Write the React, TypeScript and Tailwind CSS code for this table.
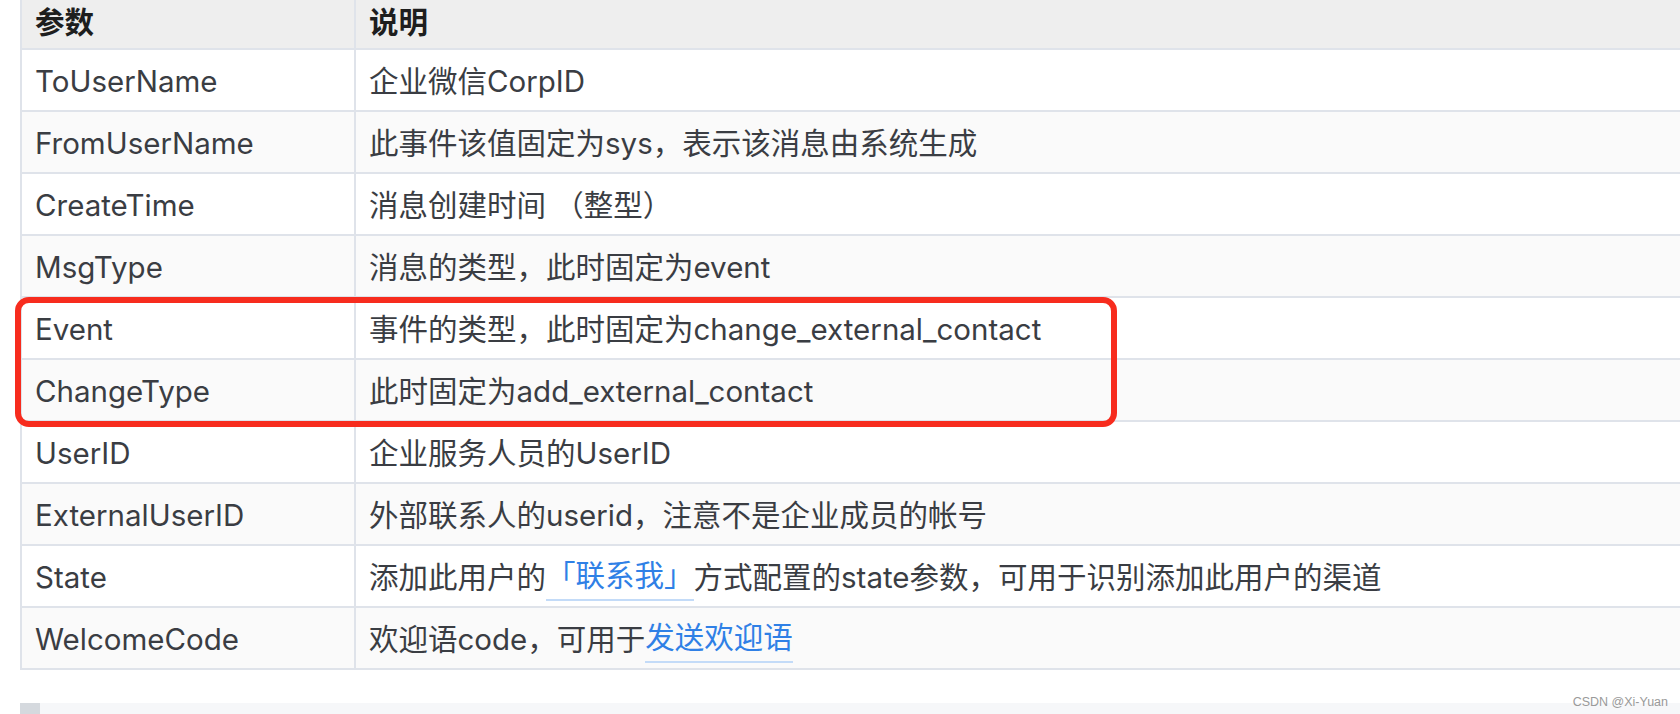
import React from "react";

type Row = { name: string; desc: React.ReactNode };

const Link = ({ children }: { children: React.ReactNode }) => (
  <span className="text-[#2f80e6] border-b-2 border-[#c3dbf8] pb-[1px]">{children}</span>
);

const rows: Row[] = [
  { name: "ToUserName", desc: "企业微信CorpID" },
  { name: "FromUserName", desc: "此事件该值固定为sys，表示该消息由系统生成" },
  { name: "CreateTime", desc: "消息创建时间 （整型）" },
  { name: "MsgType", desc: "消息的类型，此时固定为event" },
  { name: "Event", desc: "事件的类型，此时固定为change_external_contact" },
  { name: "ChangeType", desc: "此时固定为add_external_contact" },
  { name: "UserID", desc: "企业服务人员的UserID" },
  { name: "ExternalUserID", desc: "外部联系人的userid，注意不是企业成员的帐号" },
  {
    name: "State",
    desc: (
      <>
        添加此用户的<Link>「联系我」</Link>方式配置的state参数，可用于识别添加此用户的渠道
      </>
    ),
  },
  {
    name: "WelcomeCode",
    desc: (
      <>
        欢迎语code，可用于<Link>发送欢迎语</Link>
      </>
    ),
  },
];

export default function App() {
  return (
    <div
      className="relative w-[1680px] h-[714px] overflow-hidden bg-white text-[29.5px] text-[#3a3d43]"
      style={{ fontFamily: 'Inter, "Noto Sans CJK SC", sans-serif' }}
    >
      {/* TABLE */}
      <div className="ml-[20px] w-[1720px] border-l-2 border-[#dfe3ea]">
        <div className="flex h-[50px] bg-[#eeeeee] border-b-2 border-[#dfe3ea] font-bold text-[#1e1e1e]">
          <div className="w-[334px] shrink-0 border-r-2 border-[#dfe3ea] pl-[13px] pb-[4px] flex items-center">
            参数
          </div>
          <div className="pl-[13px] pb-[4px] flex items-center">说明</div>
        </div>
        {rows.map((r, i) => (
          <div
            key={r.name}
            className={
              "flex h-[62px] border-b-2 border-[#dfe3ea] " +
              (i % 2 === 0 ? "bg-white" : "bg-[#fafafa]")
            }
          >
            <div className="w-[334px] shrink-0 border-r-2 border-[#dfe3ea] pl-[13px] pt-[2px] flex items-center whitespace-nowrap">
              {r.name}
            </div>
            <div className="pl-[13px] pt-[2px] flex items-center whitespace-nowrap">{r.desc}</div>
          </div>
        ))}
      </div>

      {/* NEXT BLOCK */}
      <div className="mt-[33px] ml-[20px] h-[40px] bg-[#f6f7f9] border-l-[20px] border-[#d5d9de]" />

      {/* RED ANNOTATION */}
      <div className="absolute left-[15px] top-[297px] w-[1102px] h-[130px] border-[6px] border-[#f72c1e] rounded-[14px]" />

      {/* WATERMARK */}
      <div
        className="absolute right-[12px] bottom-[6px] text-[12.5px] leading-none text-[#9a9a9a]"
        style={{ fontFamily: '"Liberation Sans", sans-serif' }}
      >
        CSDN @Xi-Yuan
      </div>
    </div>
  );
}
